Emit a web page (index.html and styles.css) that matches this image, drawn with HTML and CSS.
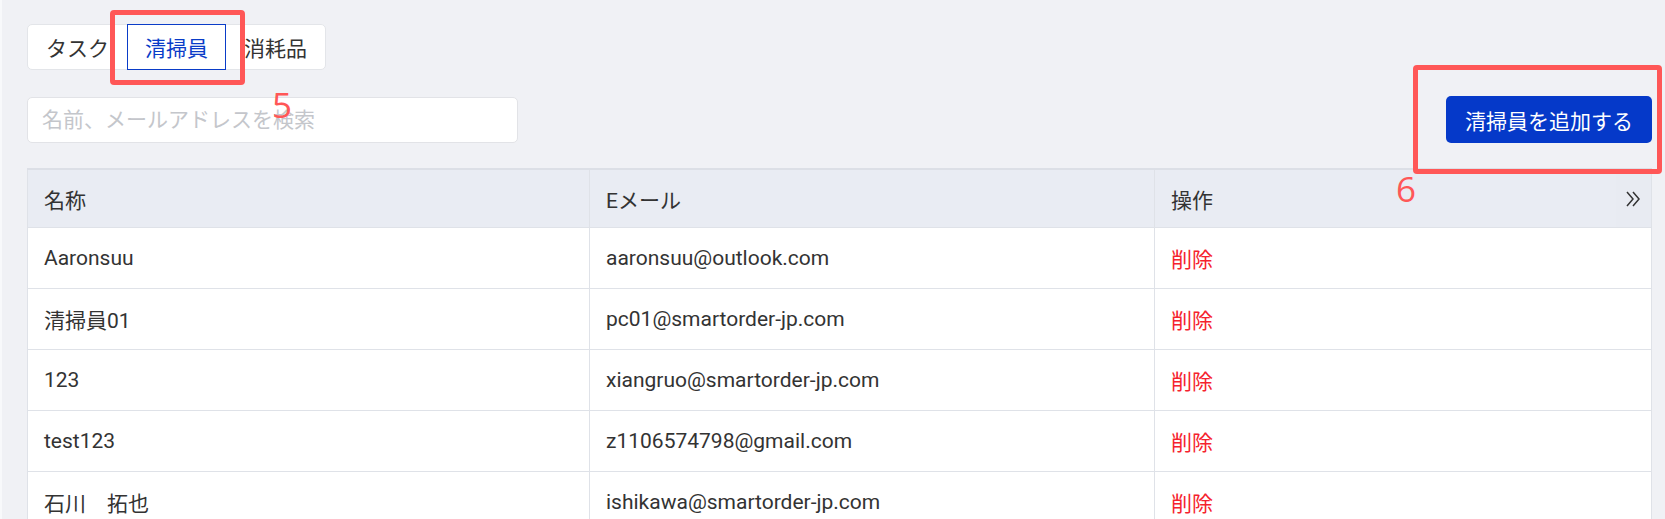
FILE: index.html
```html
<!DOCTYPE html>
<html lang="ja">
<head>
    <meta charset="UTF-8">
    <meta name="viewport" content="width=device-width, initial-scale=1.0">
    <title>清掃員</title>
    <link rel="stylesheet" href="styles.css">
</head>
<body>
    <div class="page">
        <div class="tabs">
            <div class="tab">タスク</div>
            <div class="tab active">清掃員</div>
            <div class="tab">消耗品</div>
        </div>

        <div class="toolbar">
            <input class="search" type="text" placeholder="名前、メールアドレスを検索">
            <button class="add-btn">清掃員を追加する</button>
        </div>

        <table class="staff-table">
            <colgroup>
                <col class="col-name">
                <col class="col-mail">
                <col>
                <col class="col-expand">
            </colgroup>
            <thead>
                <tr>
                    <th>名称</th>
                    <th>Eメール</th>
                    <th class="th-op">操作</th>
                    <th class="expand">
                        <svg width="14" height="16" viewBox="0 0 14 16" fill="none" stroke="#333" stroke-width="1.5">
                            <path d="M1 1 L7 8 L1 15"/>
                            <path d="M7 1 L13 8 L7 15"/>
                        </svg>
                    </th>
                </tr>
            </thead>
            <tbody>
                <tr><td>Aaronsuu</td><td>aaronsuu@outlook.com</td><td colspan="2"><a class="del">削除</a></td></tr>
                <tr><td>清掃員01</td><td>pc01@smartorder-jp.com</td><td colspan="2"><a class="del">削除</a></td></tr>
                <tr><td>123</td><td>xiangruo@smartorder-jp.com</td><td colspan="2"><a class="del">削除</a></td></tr>
                <tr><td>test123</td><td>z1106574798@gmail.com</td><td colspan="2"><a class="del">削除</a></td></tr>
                <tr><td>石川　拓也</td><td>ishikawa@smartorder-jp.com</td><td colspan="2"><a class="del">削除</a></td></tr>
            </tbody>
        </table>
    </div>

    <!-- step markers -->
    <div class="mark mark-tab"></div>
    <div class="mark-num num-5">5</div>
    <div class="mark mark-add"></div>
    <div class="mark-num num-6">6</div>
</body>
</html>
```

FILE: styles.css
```css
html, body {
    margin: 0;
    height: 519px;
    overflow: hidden;
}
body {
    background: #f0f1f5;
    font-family: Roboto, "Noto Sans CJK SC", sans-serif;
    font-size: 21px;
    color: #333;
    position: relative;
}
.page {
    border-left: 2px solid #f8f9fb;
    padding: 24px 13px 0 25px;
}
.tabs {
    display: inline-flex;
    height: 46px;
    box-sizing: border-box;
    background: #fff;
    border: 1px solid #e3e5e9;
    border-radius: 5px;
}
.tab {
    display: flex;
    align-items: center;
    height: 46px;
    margin: -1px 0;
    padding: 0 17px;
    box-sizing: border-box;
    border: 1px solid transparent;
    cursor: pointer;
}
.tab.active {
    border-color: #0a3cc8;
    color: #0a3cc8;
}
.toolbar {
    display: flex;
    justify-content: space-between;
    align-items: center;
    margin-top: 26px;
}
.search {
    width: 491px;
    height: 46px;
    box-sizing: border-box;
    padding: 0 14px;
    border: 1px solid #e2e3e7;
    border-radius: 5px;
    font-family: inherit;
    font-size: 21px;
    color: #333;
    outline: none;
}
.search::placeholder {
    color: #c4c6cb;
}
.add-btn {
    height: 47px;
    padding: 0 19px;
    border: none;
    border-radius: 5px;
    background: #0539c9;
    color: #fff;
    font-family: inherit;
    font-size: 21px;
    cursor: pointer;
}
.staff-table {
    width: 100%;
    margin-top: 25px;
    border-collapse: collapse;
    table-layout: fixed;
    background: #fff;
    border: 1px solid #dfe2e8;
    border-top: 2px solid #dcdfe6;
}
.col-name { width: 562px; }
.col-mail { width: 565px; }
.col-expand { width: 36px; }
.staff-table th,
.staff-table td {
    text-align: left;
    font-weight: normal;
    padding: 0 16px;
    border-right: 1px solid #dfe2e8;
    border-bottom: 1px solid #dfe2e8;
    white-space: nowrap;
}
.staff-table th {
    height: 57px;
    background: #e9ecf3;
}
.staff-table td {
    height: 60px;
}
.staff-table th.th-op {
    border-right: none;
}
.staff-table th.expand {
    padding: 0;
    text-align: center;
    background: #e8ebf2;
    box-shadow: -5px 5px 12px rgba(40, 50, 80, 0.09);
    position: relative;
}
.staff-table th.expand svg {
    display: block;
    margin: 0 auto;
}
.del {
    color: #f5222d;
    cursor: pointer;
}
.mark {
    position: absolute;
    box-sizing: border-box;
    border: 5px solid #ff5757;
    border-radius: 4px;
}
.mark-tab {
    left: 110px;
    top: 10px;
    width: 135px;
    height: 75px;
}
.mark-add {
    left: 1413px;
    top: 65px;
    width: 249px;
    height: 109px;
}
.mark-num {
    position: absolute;
    font-family: "Open Sans", sans-serif;
    font-size: 35px;
    line-height: 1;
    color: #ff5757;
}
.num-5 {
    left: 272px;
    top: 87px;
}
.num-6 {
    left: 1396px;
    top: 171px;
}
```
